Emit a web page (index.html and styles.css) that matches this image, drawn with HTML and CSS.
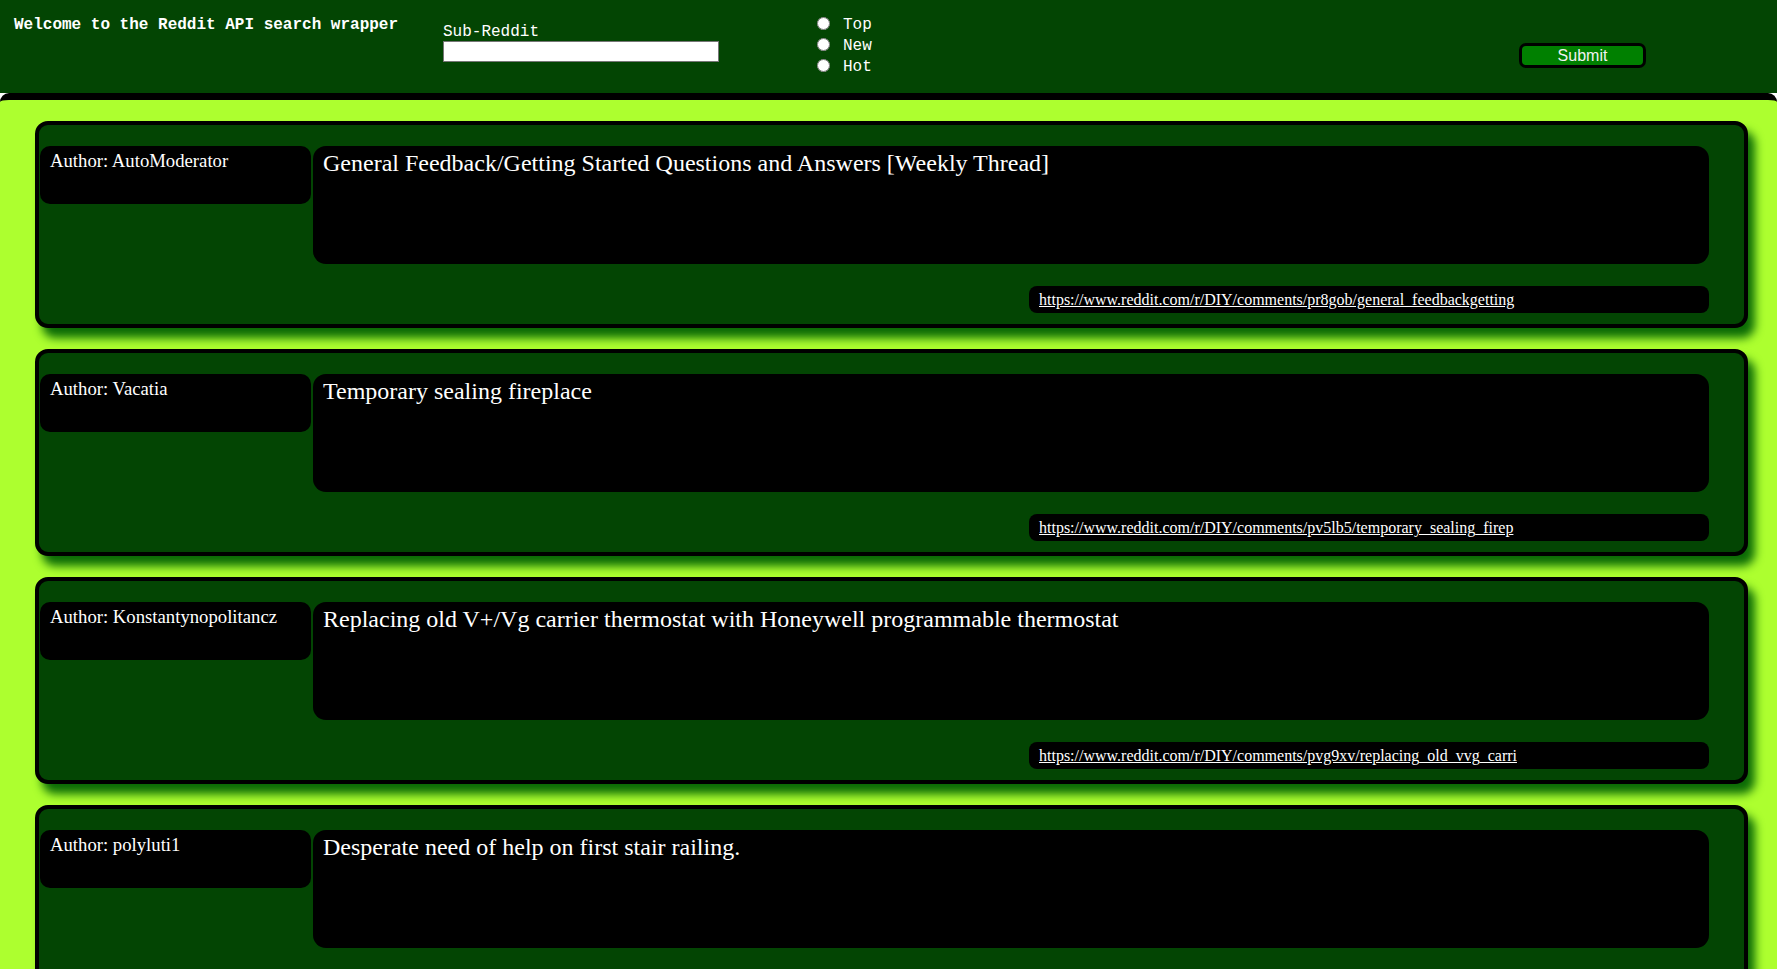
FILE: index.html
```html
<!DOCTYPE html>
<html lang="en">
<head>
<meta charset="utf-8">
<title>Reddit API search wrapper</title>
<link rel="stylesheet" href="styles.css">
</head>
<body>
<header class="topbar">
  <div class="welcome">Welcome to the Reddit API search wrapper</div>
  <div class="field">
    <label class="field-label" for="sub">Sub-Reddit</label>
    <input class="field-input" id="sub" type="text">
  </div>
  <div class="sort">
    <div class="sort-row"><input type="radio" name="sort" id="top"> <label for="top">Top</label></div>
    <div class="sort-row"><input type="radio" name="sort" id="new"> <label for="new">New</label></div>
    <div class="sort-row"><input type="radio" name="sort" id="hot"> <label for="hot">Hot</label></div>
  </div>
  <button class="submit" type="button">Submit</button>
</header>
<main class="results">
  <article class="post">
    <div class="post-author">Author: AutoModerator</div>
    <div class="post-title">General Feedback/Getting Started Questions and Answers [Weekly Thread]</div>
    <div class="post-link"><a href="#">https://www.reddit.com/r/DIY/comments/pr8gob/general_feedbackgetting</a></div>
  </article>
  <article class="post">
    <div class="post-author">Author: Vacatia</div>
    <div class="post-title">Temporary sealing fireplace</div>
    <div class="post-link"><a href="#">https://www.reddit.com/r/DIY/comments/pv5lb5/temporary_sealing_firep</a></div>
  </article>
  <article class="post">
    <div class="post-author">Author: Konstantynopolitancz</div>
    <div class="post-title">Replacing old V+/Vg carrier thermostat with Honeywell programmable thermostat</div>
    <div class="post-link"><a href="#">https://www.reddit.com/r/DIY/comments/pvg9xv/replacing_old_vvg_carri</a></div>
  </article>
  <article class="post">
    <div class="post-author">Author: polyluti1</div>
    <div class="post-title">Desperate need of help on first stair railing.</div>
    <div class="post-link"><a href="#">https://www.reddit.com/r/DIY/comments/pvf2k1/desperate_need_of_help_o</a></div>
  </article>
</main>
</body>
</html>
```
FILE: styles.css
```css
html, body {
  margin: 0;
  padding: 0;
  background: #ffffff;
}

.topbar {
  height: 93px;
  box-sizing: border-box;
  background: #034503;
  color: #ffffff;
  font-family: "Liberation Mono", "DejaVu Sans Mono", monospace;
  font-size: 16px;
  display: grid;
  grid-template-columns: 429px 369px 707px 127px;
  align-items: start;
  padding-left: 14px;
}

.welcome {
  font-weight: bold;
  margin-top: 16px;
}

.field {
  margin-top: 23px;
  display: flex;
  flex-direction: column;
  align-items: flex-start;
}

.field-label {
  line-height: 18px;
}

.field-input {
  width: 276px;
  height: 21px;
  box-sizing: border-box;
  margin: 0;
  border: 1px solid #767676;
  background: #ffffff;
  padding: 1px 2px;
}

.sort {
  margin-top: 13px;
}

.sort-row {
  height: 21px;
  line-height: 18px;
  display: flex;
  align-items: flex-end;
}

.sort-row input {
  width: 13px;
  height: 13px;
  margin: 0 3px 4px 5px;
}

.sort-row label {
  margin-left: 10px;
}

.submit {
  margin-top: 43px;
  width: 127px;
  height: 25px;
  box-sizing: border-box;
  border: 3px solid #000000;
  border-radius: 7px;
  background: #008000;
  color: #f2f2f2;
  font-family: "Liberation Sans", Arial, sans-serif;
  font-size: 16px;
  padding: 0;
  line-height: 18px;
}

.results {
  background: #adff2f;
  border-top: 7px solid #000000;
  border-radius: 9px 9px 0 0;
  padding: 21px 29px 21px 35px;
  display: flex;
  flex-direction: column;
  gap: 21px;
}

.post {
  border: 4px solid #000000;
  border-radius: 13px;
  background: #034503;
  box-shadow: 7px 10px 10px #0b6b06;
  padding: 21px 35px 11px 1px;
  display: grid;
  grid-template-columns: 271px 1fr;
  column-gap: 2px;
  row-gap: 22px;
  align-items: start;
  font-family: "Liberation Serif", "Times New Roman", serif;
  color: #ffffff;
}

.post-author {
  height: 58px;
  box-sizing: border-box;
  background: #000000;
  border-radius: 10px;
  padding: 4px 10px;
  font-size: 18.72px;
}

.post-title {
  height: 118px;
  box-sizing: border-box;
  background: #000000;
  border-radius: 13px;
  padding: 4px 10px;
  font-size: 24px;
}

.post-link {
  grid-column: 1 / 3;
  justify-self: end;
  width: 680px;
  height: 27px;
  box-sizing: border-box;
  background: #000000;
  border-radius: 8px;
  padding: 5px 10px 4px;
  font-size: 16px;
  line-height: 18px;
  white-space: nowrap;
  overflow: hidden;
}

.post-link a {
  color: #ffffff;
  text-decoration: underline;
}
```
